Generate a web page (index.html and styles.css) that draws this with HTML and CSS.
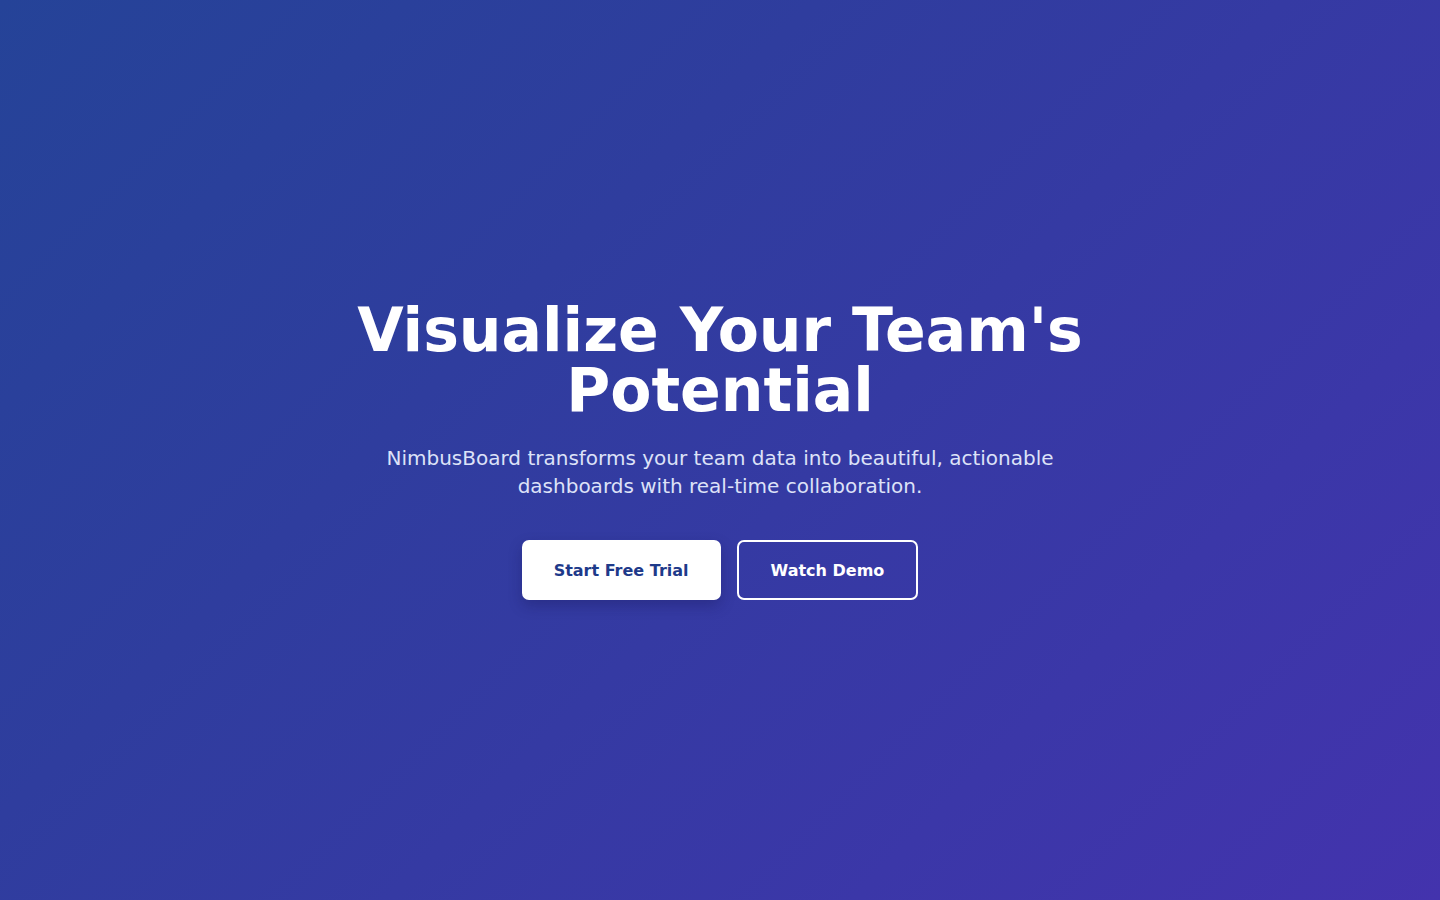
FILE: index.html
```html
<!DOCTYPE html>
<html lang="en">
<head>
<meta charset="utf-8">
<title>NimbusBoard</title>
<link rel="stylesheet" href="styles.css">
</head>
<body>
<main class="hero">
  <div class="hero-content">
    <h1 class="hero-title">Visualize Your Team's Potential</h1>
    <p class="hero-subtitle">NimbusBoard transforms your team data into beautiful, actionable dashboards with real-time collaboration.</p>
    <div class="hero-actions">
      <a class="btn btn-primary" href="#">Start Free Trial</a>
      <a class="btn btn-outline" href="#">Watch Demo</a>
    </div>
  </div>
</main>
</body>
</html>
```

FILE: styles.css
```css
* { box-sizing: border-box; }
html, body { margin: 0; padding: 0; height: 100%; }
body {
  font-family: "DejaVu Sans", sans-serif;
  color: #ffffff;
}
.hero {
  min-height: 100vh;
  display: flex;
  align-items: center;
  justify-content: center;
  background: linear-gradient(135deg, #254398 0%, #2f3d9e 35%, #3b37a8 75%, #4333ad 100%);
}
.hero-content {
  display: flex;
  flex-direction: column;
  align-items: center;
  text-align: center;
  max-width: 800px;
}
.hero-title {
  margin: 0;
  font-size: 60px;
  font-weight: 700;
  line-height: 60px;
  color: #ffffff;
}
.hero-subtitle {
  margin: 24px 0 0;
  max-width: 700px;
  font-size: 20px;
  line-height: 28px;
  color: #dde2f8;
}
.hero-actions {
  margin-top: 40px;
  display: flex;
  gap: 16px;
}
.btn {
  display: inline-flex;
  align-items: center;
  justify-content: center;
  height: 60px;
  padding: 0 32px;
  font-size: 16px;
  font-weight: 700;
  text-decoration: none;
  border-radius: 7px;
}
.btn-primary {
  background: #ffffff;
  color: #1e3a8a;
  box-shadow: 0 6px 14px rgba(20, 20, 80, 0.3);
}
.btn-outline {
  background: transparent;
  color: #ffffff;
  border: 2px solid #ffffff;
}
```
